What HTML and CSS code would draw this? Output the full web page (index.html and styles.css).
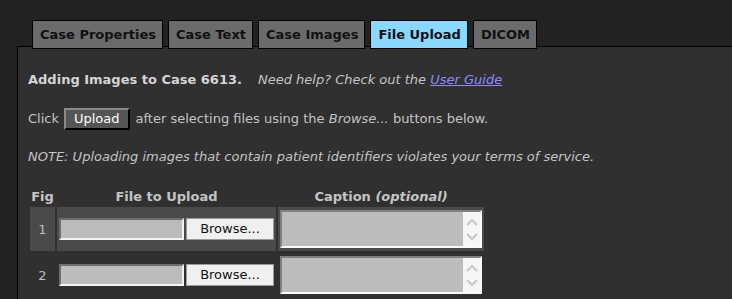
FILE: index.html
```html
<!DOCTYPE html>
<html lang="en">
<head>
    <meta charset="UTF-8">
    <meta name="viewport" content="width=device-width, initial-scale=1.0">
    <title>File Upload</title>
    <link rel="stylesheet" href="styles.css">
</head>
<body>
    <!-- Tabs -->
    <div class="tabs">
        <div class="tab">Case Properties</div>
        <div class="tab">Case Text</div>
        <div class="tab">Case Images</div>
        <div class="tab active">File Upload</div>
        <div class="tab">DICOM</div>
    </div>

    <!-- Upload panel -->
    <div class="panel">
        <p class="intro"><b>Adding Images to Case 6613.</b><i class="help">Need help? Check out the <a href="#">User Guide</a></i></p>
        <p class="click">Click <span class="upload-btn">Upload</span> after selecting files using the&nbsp;<i>Browse...</i>&nbsp;buttons below.</p>
        <p class="note"><i>NOTE: Uploading images that contain patient identifiers violates your terms of service.</i></p>

        <table class="files">
            <tr>
                <th class="fig">Fig</th>
                <th class="file">File to Upload</th>
                <th class="caption">Caption <i>(optional)</i></th>
            </tr>
            <tr class="hilite">
                <td class="num">1</td>
                <td class="file-cell">
                    <span class="file-name"></span><span class="browse">Browse...</span>
                </td>
                <td class="cap-cell">
                    <div class="textbox">
                        <div class="scroll">
                            <svg width="12" height="8" viewBox="0 0 12 8"><path d="M1 7 L6 2 L11 7" fill="none" stroke="#c8c8c8" stroke-width="2"/></svg>
                            <svg width="12" height="8" viewBox="0 0 12 8"><path d="M1 1 L6 6 L11 1" fill="none" stroke="#c8c8c8" stroke-width="2"/></svg>
                        </div>
                    </div>
                </td>
            </tr>
            <tr>
                <td class="num">2</td>
                <td class="file-cell">
                    <span class="file-name"></span><span class="browse">Browse...</span>
                </td>
                <td class="cap-cell">
                    <div class="textbox">
                        <div class="scroll">
                            <svg width="12" height="8" viewBox="0 0 12 8"><path d="M1 7 L6 2 L11 7" fill="none" stroke="#c8c8c8" stroke-width="2"/></svg>
                            <svg width="12" height="8" viewBox="0 0 12 8"><path d="M1 1 L6 6 L11 1" fill="none" stroke="#c8c8c8" stroke-width="2"/></svg>
                        </div>
                    </div>
                </td>
            </tr>
        </table>
    </div>
</body>
</html>
```

FILE: styles.css
```css
/* Basic styling */
body {
    margin: 0;
    background-color: #222;
    font-family: "DejaVu Sans", Verdana, sans-serif;
    font-size: 13px;
    color: #c4c4c4;
    overflow: hidden;
}

.tabs {
    display: flex;
    gap: 5px;
    padding: 20px 0 0 32px;
    margin-bottom: -3px;
    position: relative;
}

.tab {
    height: 27px;
    line-height: 27px;
    padding: 0 6px 0 7px;
    background-color: #6b6b6b;
    border: 1px solid #000;
    color: #111;
    font-weight: bold;
    white-space: nowrap;
}

.tab.active {
    background-color: #88d8ff;
}

.panel {
    margin-left: 17px;
    width: 760px;
    height: 300px;
    background-color: #303030;
    border: 1px solid #000;
    padding: 12px 10px;
}

.panel p {
    margin: 0;
    line-height: 16px;
    white-space: nowrap;
}

.intro {
    margin-top: 13px !important;
}

.intro b {
    color: #d4d4d4;
}

.help {
    margin-left: 16px;
}

.help a {
    color: #8c8cff;
}

.click {
    display: flex;
    align-items: center;
    height: 22px;
    margin-top: 20px !important;
}

.upload-btn {
    display: inline-block;
    height: 18px;
    line-height: 18px;
    padding: 0 8px;
    margin: 0 6px 0 5px;
    background-color: #555;
    color: #fff;
    border: 2px solid;
    border-color: #8a8a8a #000 #000 #8a8a8a;
}

.note {
    margin-top: 19px !important;
}

.files {
    margin-top: 21px;
    border-spacing: 2px;
}

.files th {
    height: 17px;
    padding: 0;
    line-height: 17px;
    color: #c4c4c4;
}

.fig {
    width: 25px;
}

.file {
    width: 219px;
}

.caption {
    width: 206px;
}

.files td {
    padding: 0;
}

.hilite td {
    background-color: #4a4a4a;
}

.num {
    text-align: center;
    color: #bdbdbd;
}

.file-cell {
    padding-left: 2px !important;
    white-space: nowrap;
}

.file-name {
    display: inline-block;
    vertical-align: middle;
    width: 121px;
    height: 18px;
    background-color: #bcbcbc;
    border: 2px solid;
    border-color: #6e6e6e #f4f4f4 #f4f4f4 #6e6e6e;
}

.browse {
    display: inline-block;
    vertical-align: middle;
    width: 86px;
    height: 20px;
    line-height: 20px;
    margin-left: 2px;
    text-align: center;
    background-color: #f0f0f0;
    color: #111;
    border: 1px solid #9a9a9a;
}

.cap-cell {
    padding: 3px 2px !important;
    vertical-align: top;
}

.textbox {
    width: 198px;
    height: 34px;
    display: flex;
    justify-content: flex-end;
    background-color: #bcbcbc;
    border: 2px solid;
    border-color: #808080 #fafafa #fafafa #808080;
}

.scroll {
    width: 17px;
    background-color: #f6f6f6;
    display: flex;
    flex-direction: column;
    align-items: center;
    justify-content: space-around;
    padding: 2px 0;
}
```
